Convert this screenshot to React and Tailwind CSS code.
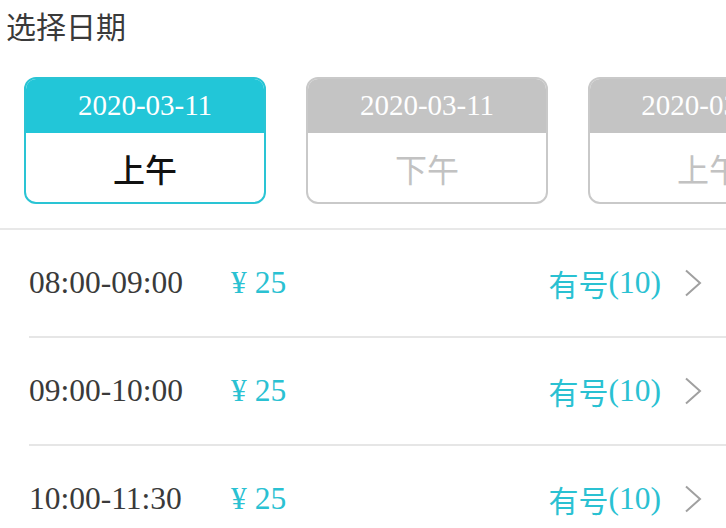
const dates = [
  { date: "2020-03-11", half: "上午", active: true },
  { date: "2020-03-11", half: "下午", active: false },
  { date: "2020-03-12", half: "上午", active: false },
];

const slots = [
  { time: "08:00-09:00", price: 25, left: 10 },
  { time: "09:00-10:00", price: 25, left: 10 },
  { time: "10:00-11:30", price: 25, left: 10 },
];

const serif = "font-['Liberation_Serif','Times_New_Roman',serif]";
const cjk = "font-['Noto_Sans_CJK_SC',sans-serif]";

function Chevron() {
  return (
    <svg width="20" height="28" viewBox="0 0 20 28" className="ml-[22px] shrink-0">
      <path d="M3 1.5 L17 14 L3 26.5" fill="none" stroke="#a0a0a0" strokeWidth="2" />
    </svg>
  );
}

export default function App() {
  return (
    <div className="w-[726px] h-[528px] overflow-hidden bg-white">
      <h2 className={`${cjk} pl-[6px] pt-[5px] text-[30px] leading-[40px] text-[#3a3a3a]`}>
        选择日期
      </h2>

      <div className="flex gap-[40px] pl-[24px] pt-[32px] pb-[24px] overflow-hidden">
        {dates.map((d, i) => (
          <div
            key={i}
            className={`w-[242px] h-[127px] shrink-0 rounded-[12px] border-2 overflow-hidden flex flex-col ${
              d.active ? "border-[#2ac4d4]" : "border-[#c9c9c9]"
            }`}
          >
            <div
              className={`${serif} h-[54px] flex items-center justify-center text-[29px] text-white ${
                d.active ? "bg-[#22c6d8]" : "bg-[#c4c4c4]"
              }`}
            >
              {d.date}
            </div>
            <div
              className={`${cjk} flex-1 flex items-center justify-center text-[32px] ${
                d.active ? "text-[#111] font-medium" : "text-[#c2c2c2]"
              }`}
            >
              {d.half}
            </div>
          </div>
        ))}
      </div>

      <div className="border-t-2 border-[#e8e8e8]">
        {slots.map((s, i) => (
          <div key={i} className="pl-[29px]">
            <div className="h-[108px] flex items-center pr-[23px] border-b-2 border-[#e6e6e6]">
              <span className={`${serif} text-[31.5px] text-[#3a3a3a] w-[202px]`}>{s.time}</span>
              <span className={`${serif} text-[31.5px] text-[#2ac1d2]`}>¥ {s.price}</span>
              <span className="ml-auto flex items-center text-[#2ac1d2]">
                <span className={`${cjk} text-[30px]`}>有号</span>
                <span className={`${serif} text-[31.5px]`}>({s.left})</span>
              </span>
              <Chevron />
            </div>
          </div>
        ))}
      </div>
    </div>
  );
}
